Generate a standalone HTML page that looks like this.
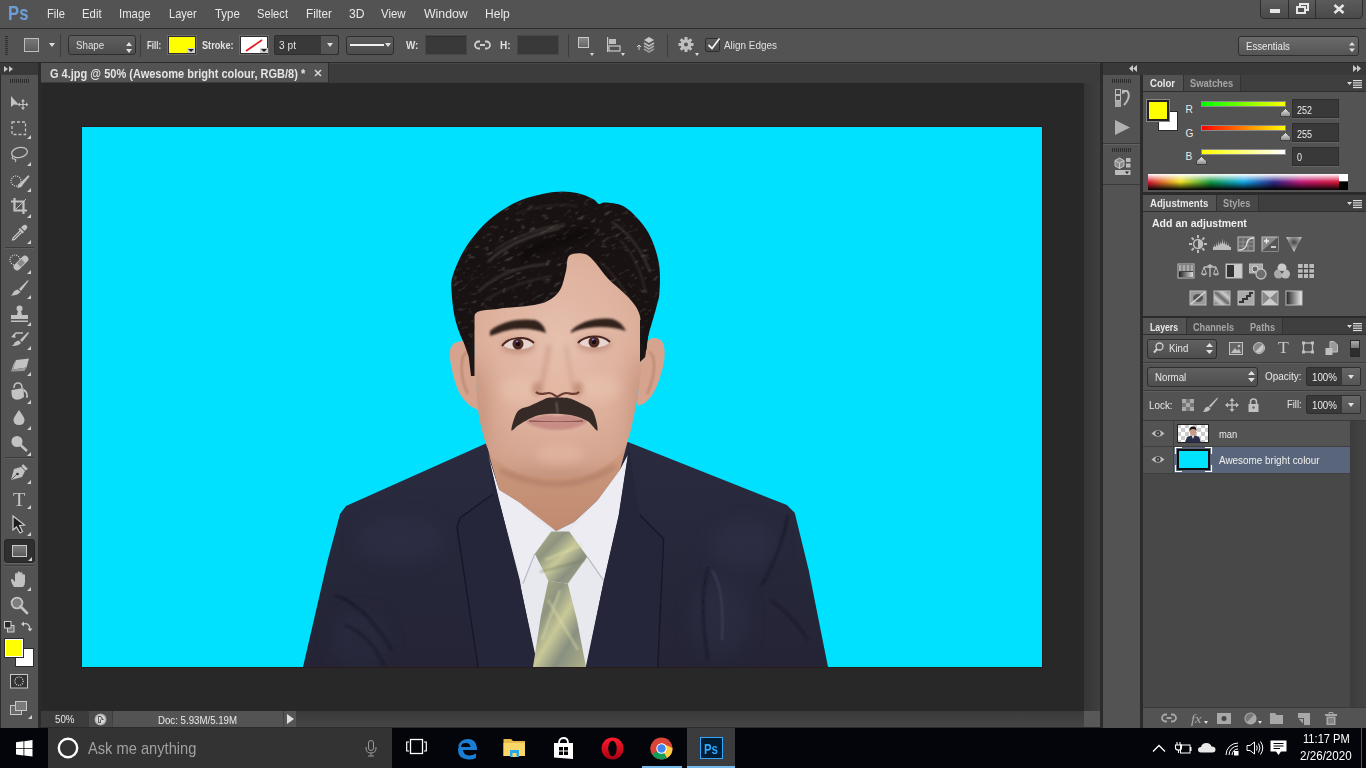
<!DOCTYPE html><html><head><meta charset="utf-8"><style>
html,body{margin:0;padding:0;width:1366px;height:768px;overflow:hidden;background:#2b2b2b}
body>div,body>span,body>svg{position:absolute;box-sizing:border-box}
.t{position:absolute;line-height:1.117;white-space:nowrap;font-family:"Liberation Sans",sans-serif}
svg{overflow:visible}
</style></head><body>
<div style="left:0px;top:0px;width:1366px;height:28px;background:#535353"></div>
<div style="left:0px;top:28px;width:1366px;height:1px;background:#2b2b2b"></div>
<div style="left:0px;top:29px;width:1366px;height:33px;background:#535353"></div>
<div style="left:0px;top:62px;width:1366px;height:1px;background:#2b2b2b"></div>
<div style="left:0px;top:63px;width:1366px;height:665px;background:#2b2b2b"></div>
<div style="left:41px;top:83px;width:1043px;height:628px;background:#282828"></div>
<div style="left:41px;top:63px;width:1059px;height:20px;background:#3c3c3c;border-top:1px solid #474747"></div>
<div style="left:41px;top:63px;width:287px;height:19px;background:#535353"></div>
<div style="left:328px;top:63px;width:1px;height:20px;background:#2e2e2e"></div>
<div style="left:1084px;top:83px;width:16px;height:628px;background:linear-gradient(90deg,#363636,#3f3f3f)"></div>
<div style="left:41px;top:711px;width:1043px;height:16px;background:linear-gradient(#3a3a3a,#454545)"></div>
<div style="left:1084px;top:711px;width:16px;height:16px;background:#585858"></div>
<div style="left:0px;top:63px;width:38px;height:12px;background:#393939"></div>
<div style="left:1px;top:75px;width:37px;height:653px;background:#535353"></div>
<div style="left:1103px;top:63px;width:263px;height:12px;background:#393939"></div>
<div style="left:1103px;top:75px;width:37px;height:90px;background:#535353"></div>
<div style="left:1103px;top:141px;width:37px;height:1px;background:#3a3a3a"></div>
<div style="left:1103px;top:75px;width:37px;height:653px;background:#535353"></div>
<div style="left:1143px;top:75px;width:223px;height:117px;background:#535353"></div>
<div style="left:1143px;top:195px;width:223px;height:121px;background:#535353"></div>
<div style="left:1143px;top:318px;width:223px;height:410px;background:#535353"></div>
<div style="left:0px;top:728px;width:1366px;height:40px;background:#03050a"></div>
<span class="t" style="left:7.50px;top:1.43px;font-size:21.08px;color:#6d9fd6;font-weight:700;transform:scaleX(0.794);transform-origin:0 0;">Ps</span>
<span class="t" style="left:47.00px;top:7.42px;font-size:12.79px;color:#e8e8e8;font-weight:400;transform:scaleX(0.874);transform-origin:0 0;">File</span>
<span class="t" style="left:82.40px;top:7.42px;font-size:12.79px;color:#e8e8e8;font-weight:400;transform:scaleX(0.888);transform-origin:0 0;">Edit</span>
<span class="t" style="left:119.30px;top:7.42px;font-size:12.79px;color:#e8e8e8;font-weight:400;transform:scaleX(0.886);transform-origin:0 0;">Image</span>
<span class="t" style="left:169.40px;top:7.42px;font-size:12.79px;color:#e8e8e8;font-weight:400;transform:scaleX(0.863);transform-origin:0 0;">Layer</span>
<span class="t" style="left:214.50px;top:7.42px;font-size:12.79px;color:#e8e8e8;font-weight:400;transform:scaleX(0.894);transform-origin:0 0;">Type</span>
<span class="t" style="left:257.00px;top:7.42px;font-size:12.79px;color:#e8e8e8;font-weight:400;transform:scaleX(0.872);transform-origin:0 0;">Select</span>
<span class="t" style="left:306.00px;top:7.42px;font-size:12.79px;color:#e8e8e8;font-weight:400;transform:scaleX(0.916);transform-origin:0 0;">Filter</span>
<span class="t" style="left:349.00px;top:7.42px;font-size:12.79px;color:#e8e8e8;font-weight:400;transform:scaleX(0.953);transform-origin:0 0;">3D</span>
<span class="t" style="left:381.00px;top:7.42px;font-size:12.79px;color:#e8e8e8;font-weight:400;transform:scaleX(0.895);transform-origin:0 0;">View</span>
<span class="t" style="left:424.00px;top:7.42px;font-size:12.79px;color:#e8e8e8;font-weight:400;transform:scaleX(0.960);transform-origin:0 0;">Window</span>
<span class="t" style="left:485.00px;top:7.42px;font-size:12.79px;color:#e8e8e8;font-weight:400;transform:scaleX(0.944);transform-origin:0 0;">Help</span>
<div style="left:1260px;top:-2px;width:103px;height:21px;background:linear-gradient(#5c5c5c,#4a4a4a);border:1px solid #2e2e2e;border-radius:0 0 4px 4px"></div>
<div style="left:1288px;top:0px;width:1px;height:18px;background:#2e2e2e"></div>
<div style="left:1315px;top:0px;width:1px;height:18px;background:#2e2e2e"></div>
<div style="left:1270px;top:9px;width:10px;height:4px;background:#e6e6e6"></div>
<svg style="left:1296px;top:3px;" width="13" height="11" viewBox="0 0 13 11"><rect x="4" y="1" width="8" height="6" fill="none" stroke="#e6e6e6" stroke-width="2"/><rect x="1" y="4" width="8" height="6" fill="#4f4f4f" stroke="#e6e6e6" stroke-width="2"/></svg>
<svg style="left:1333px;top:4px;" width="12" height="10" viewBox="0 0 12 10"><path d="M1.5 1 L10.5 9 M10.5 1 L1.5 9" stroke="#e6e6e6" stroke-width="2.6"/></svg>
<svg style="left:5px;top:36px;" width="4" height="20" viewBox="0 0 4 20"><rect x="0" y="0" width="3" height="1" fill="#2e2e2e"/><rect x="0" y="2" width="3" height="1" fill="#2e2e2e"/><rect x="0" y="4" width="3" height="1" fill="#2e2e2e"/><rect x="0" y="6" width="3" height="1" fill="#2e2e2e"/><rect x="0" y="8" width="3" height="1" fill="#2e2e2e"/><rect x="0" y="10" width="3" height="1" fill="#2e2e2e"/><rect x="0" y="12" width="3" height="1" fill="#2e2e2e"/><rect x="0" y="14" width="3" height="1" fill="#2e2e2e"/><rect x="0" y="16" width="3" height="1" fill="#2e2e2e"/><rect x="0" y="18" width="3" height="1" fill="#2e2e2e"/></svg>
<div style="left:24px;top:38px;width:15px;height:14px;background:linear-gradient(#777,#5c5c5c);border:1px solid #bdbdbd"></div>
<svg style="left:49px;top:43px;" width="6" height="4" viewBox="0 0 6 4"><path d="M0 0 H6 L3 4 Z" fill="#dedede"/></svg>
<div style="left:60px;top:34px;width:1px;height:23px;background:#3e3e3e"></div>
<div style="left:68px;top:35px;width:68px;height:20px;background:linear-gradient(#5f5f5f,#4d4d4d);border:1px solid #2e2e2e;border-radius:3px"></div>
<span class="t" style="left:75.80px;top:38.83px;font-size:10.90px;color:#e0e0e0;font-weight:400;transform:scaleX(0.895);transform-origin:0 0;">Shape</span>
<svg style="left:126px;top:42px;" width="6" height="12" viewBox="0 0 6 12"><path d="M0 4 L3 0 L6 4 Z M0 7 L3 11 L6 7 Z" fill="#e0e0e0"/></svg>
<div style="left:140px;top:34px;width:1px;height:23px;background:#3e3e3e"></div>
<span class="t" style="left:146.90px;top:38.83px;font-size:10.90px;color:#e0e0e0;font-weight:700;transform:scaleX(0.729);transform-origin:0 0;">Fill:</span>
<div style="left:168px;top:36px;width:28px;height:18px;background:#ffff00;border:1px solid #2e2e2e;outline:1px solid #6a6a6a"></div>
<svg style="left:187px;top:48px;" width="8" height="5" viewBox="0 0 8 5"><rect width="8" height="5" fill="#d0d0d0"/><path d="M1 1 H7 L4 4Z" fill="#222"/></svg>
<span class="t" style="left:201.80px;top:38.83px;font-size:10.90px;color:#e0e0e0;font-weight:700;transform:scaleX(0.841);transform-origin:0 0;">Stroke:</span>
<div style="left:240px;top:36px;width:28px;height:18px;background:#fff;border:1px solid #2e2e2e;outline:1px solid #6a6a6a"></div>
<svg style="left:244px;top:38px;" width="20" height="14" viewBox="0 0 20 14"><path d="M2 13 L18 2" stroke="#e02020" stroke-width="1.8"/></svg>
<svg style="left:260px;top:48px;" width="8" height="5" viewBox="0 0 8 5"><rect width="8" height="5" fill="#d0d0d0"/><path d="M1 1 H7 L4 4Z" fill="#222"/></svg>
<div style="left:274px;top:35px;width:65px;height:20px;background:#393939;border:1px solid #2e2e2e;border-radius:2px"></div>
<div style="left:321px;top:36px;width:17px;height:18px;background:#555;border-radius:0 2px 2px 0"></div>
<span class="t" style="left:279.00px;top:38.83px;font-size:10.90px;color:#e0e0e0;font-weight:400;transform:scaleX(0.934);transform-origin:0 0;">3 pt</span>
<svg style="left:327px;top:43px;" width="6" height="4" viewBox="0 0 6 4"><path d="M0 0 H6 L3 4 Z" fill="#e0e0e0"/></svg>
<div style="left:346px;top:36px;width:48px;height:19px;background:linear-gradient(#5c5c5c,#4c4c4c);border:1px solid #2e2e2e;border-radius:3px"></div>
<div style="left:350px;top:44px;width:34px;height:2px;background:#f0f0f0"></div>
<svg style="left:385px;top:43px;" width="6" height="4" viewBox="0 0 6 4"><path d="M0 0 H6 L3 4 Z" fill="#e0e0e0"/></svg>
<span class="t" style="left:405.90px;top:38.83px;font-size:10.90px;color:#e0e0e0;font-weight:700;transform:scaleX(0.903);transform-origin:0 0;">W:</span>
<div style="left:425px;top:35px;width:42px;height:20px;background:#393939;border:1px solid #464646;box-shadow:inset 0 1px 0 #2e2e2e"></div>
<svg style="left:475px;top:39px;" width="15" height="12" viewBox="0 0 15 12"><path d="M5 2.5 H3.5 A3.5 3.5 0 0 0 3.5 9.5 H5 M10 2.5 H11.5 A3.5 3.5 0 0 1 11.5 9.5 H10 M5 6 H10" fill="none" stroke="#cfcfcf" stroke-width="1.8"/></svg>
<span class="t" style="left:499.90px;top:38.83px;font-size:10.90px;color:#e0e0e0;font-weight:700;transform:scaleX(0.922);transform-origin:0 0;">H:</span>
<div style="left:517px;top:35px;width:42px;height:20px;background:#393939;border:1px solid #464646"></div>
<div style="left:568px;top:34px;width:1px;height:23px;background:#3e3e3e"></div>
<div style="left:578px;top:37px;width:11px;height:11px;background:linear-gradient(#888,#666);border:1px solid #c8c8c8"></div>
<svg style="left:590px;top:53px;" width="4" height="3" viewBox="0 0 4 3"><path d="M0 0 H4 L2 3Z" fill="#ddd"/></svg>
<svg style="left:607px;top:37px;" width="15" height="15" viewBox="0 0 15 15"><rect x="0" y="0" width="1.2" height="15" fill="#c8c8c8"/><rect x="2" y="2" width="7" height="5" fill="#bdbdbd"/><rect x="2" y="9" width="11" height="5" fill="none" stroke="#c8c8c8" stroke-width="1.2"/></svg>
<svg style="left:621px;top:53px;" width="4" height="3" viewBox="0 0 4 3"><path d="M0 0 H4 L2 3Z" fill="#ddd"/></svg>
<svg style="left:636px;top:36px;" width="20" height="19" viewBox="0 0 20 19"><path d="M3 9 V14 M1 11 L3 9 L5 11" stroke="#cfcfcf" stroke-width="1" fill="none"/><path d="M8 4 L13 1 L18 4 L13 7Z" fill="#c8c8c8"/><path d="M8 7 L13 10 L18 7" stroke="#bbb" stroke-width="1.6" fill="none"/><path d="M8 10 L13 13 L18 10" stroke="#aaa" stroke-width="1.6" fill="none"/><path d="M8 13 L13 16 L18 13" stroke="#999" stroke-width="1.6" fill="none"/></svg>
<div style="left:667px;top:34px;width:1px;height:23px;background:#3e3e3e"></div>
<svg style="left:678px;top:37px;" width="16" height="16" viewBox="0 0 16 16"><g transform="translate(8,7.5)"><circle r="5.3" fill="#bfbfbf"/><rect x="-1.5" y="-7.5" width="3" height="3.5" fill="#bfbfbf" transform="rotate(0)"/><rect x="-1.5" y="-7.5" width="3" height="3.5" fill="#bfbfbf" transform="rotate(45)"/><rect x="-1.5" y="-7.5" width="3" height="3.5" fill="#bfbfbf" transform="rotate(90)"/><rect x="-1.5" y="-7.5" width="3" height="3.5" fill="#bfbfbf" transform="rotate(135)"/><rect x="-1.5" y="-7.5" width="3" height="3.5" fill="#bfbfbf" transform="rotate(180)"/><rect x="-1.5" y="-7.5" width="3" height="3.5" fill="#bfbfbf" transform="rotate(225)"/><rect x="-1.5" y="-7.5" width="3" height="3.5" fill="#bfbfbf" transform="rotate(270)"/><rect x="-1.5" y="-7.5" width="3" height="3.5" fill="#bfbfbf" transform="rotate(315)"/><circle r="2" fill="#535353"/></g></svg>
<svg style="left:695px;top:53px;" width="4" height="3" viewBox="0 0 4 3"><path d="M0 0 H4 L2 3Z" fill="#ddd"/></svg>
<div style="left:705px;top:38px;width:15px;height:14px;background:linear-gradient(#5a5a5a,#4a4a4a);border:1px solid #2e2e2e;border-radius:2px"></div>
<svg style="left:706px;top:37px;" width="15" height="14" viewBox="0 0 15 14"><path d="M2.5 8 L6 11.5 L13.5 1.5" stroke="#eee" stroke-width="1.8" fill="none"/></svg>
<span class="t" style="left:724.00px;top:38.83px;font-size:10.90px;color:#e0e0e0;font-weight:400;transform:scaleX(0.910);transform-origin:0 0;">Align Edges</span>
<div style="left:1238px;top:36px;width:121px;height:20px;background:linear-gradient(#6a6a6a,#555);border:1px solid #2e2e2e;border-radius:3px"></div>
<span class="t" style="left:1245.80px;top:39.53px;font-size:10.90px;color:#ececec;font-weight:400;transform:scaleX(0.883);transform-origin:0 0;">Essentials</span>
<svg style="left:1349px;top:42px;" width="6" height="10" viewBox="0 0 6 10"><path d="M0 3.5 L3 0 L6 3.5 Z M0 6.5 L3 10 L6 6.5 Z" fill="#e0e0e0"/></svg>
<span class="t" style="left:50.20px;top:67.55px;font-size:12.21px;color:#e4e4e4;font-weight:700;transform:scaleX(0.902);transform-origin:0 0;">G 4.jpg @ 50% (Awesome bright colour, RGB/8) *</span>
<svg style="left:314px;top:69px;" width="8" height="8" viewBox="0 0 8 8"><path d="M1 1 L7 7 M7 1 L1 7" stroke="#d8d8d8" stroke-width="1.5"/></svg>
<svg style="left:4px;top:66px;" width="9" height="6" viewBox="0 0 9 6"><path d="M0 0 L4 3 L0 6Z M5 0 L9 3 L5 6Z" fill="#c8c8c8"/></svg>
<svg style="left:10px;top:79px;" width="20" height="4" viewBox="0 0 20 4"><rect x="0" y="0" width="1" height="4" fill="#2c2c2c"/><rect x="2" y="0" width="1" height="4" fill="#2c2c2c"/><rect x="4" y="0" width="1" height="4" fill="#2c2c2c"/><rect x="6" y="0" width="1" height="4" fill="#2c2c2c"/><rect x="8" y="0" width="1" height="4" fill="#2c2c2c"/><rect x="10" y="0" width="1" height="4" fill="#2c2c2c"/><rect x="12" y="0" width="1" height="4" fill="#2c2c2c"/><rect x="14" y="0" width="1" height="4" fill="#2c2c2c"/><rect x="16" y="0" width="1" height="4" fill="#2c2c2c"/><rect x="18" y="0" width="1" height="4" fill="#2c2c2c"/></svg>
<div style="left:41px;top:711px;width:48px;height:16px;background:#3c3c3c"></div>
<span class="t" style="left:55.30px;top:713.73px;font-size:10.47px;color:#e8e8e8;font-weight:400;transform:scaleX(0.932);transform-origin:0 0;">50%</span>
<div style="left:89px;top:711px;width:23px;height:16px;background:#4b4b4b"></div>
<svg style="left:94px;top:713px;" width="13" height="13" viewBox="0 0 13 13"><defs><radialGradient id="sg"><stop offset="0.6" stop-color="#dadada"/><stop offset="1" stop-color="#9a9a9a"/></radialGradient></defs><circle cx="6.5" cy="6.5" r="6" fill="url(#sg)"/><path d="M4 3 H7 L10 7 H7 V10 H4Z" fill="#5a5a5a"/><path d="M5 4 H6.5 L8 6.5 H6 V9 H5Z" fill="#ddd"/></svg>
<div style="left:113px;top:711px;width:170px;height:16px;background:#535353"></div>
<span class="t" style="left:158.20px;top:714.69px;font-size:10.17px;color:#e8e8e8;font-weight:400;transform:scaleX(0.952);transform-origin:0 0;">Doc: 5.93M/5.19M</span>
<div style="left:284px;top:711px;width:12px;height:16px;background:#555"></div>
<svg style="left:287px;top:714px;" width="7" height="10" viewBox="0 0 7 10"><path d="M0 0 L7 5 L0 10Z" fill="#e0e0e0"/></svg>
<svg style="left:10px;top:95px;" width="19" height="15" viewBox="0 0 19 15"><path d="M1 1 L1 12 L4 9.5 L9 10 Z" fill="#c2c2c2"/><path d="M13 5 V14 M8.5 9.5 H17.5" stroke="#c2c2c2" stroke-width="1.2"/><path d="M13 4 L11 6.5 H15Z M13 15 L11 12.5 H15Z M7.5 9.5 L10 7.5 V11.5Z M18.5 9.5 L16 7.5 V11.5Z" fill="#c2c2c2"/></svg>
<svg style="left:11px;top:121px;" width="16" height="15" viewBox="0 0 16 15"><rect x="1" y="1" width="13.5" height="12.5" fill="none" stroke="#c2c2c2" stroke-width="1.3" stroke-dasharray="3 2"/></svg>
<svg style="left:27px;top:135px;" width="4" height="4" viewBox="0 0 4 4"><path d="M4 0 V4 H0Z" fill="#d0d0d0"/></svg>
<svg style="left:10px;top:146px;" width="19" height="17" viewBox="0 0 19 17"><ellipse cx="9.5" cy="6.5" rx="8" ry="5" fill="none" stroke="#c2c2c2" stroke-width="1.3" transform="rotate(-12 9.5 6.5)"/><path d="M3 10 Q1 13 4 13 Q7 13 5 16" fill="none" stroke="#c2c2c2" stroke-width="1.2"/></svg>
<svg style="left:27px;top:162px;" width="4" height="4" viewBox="0 0 4 4"><path d="M4 0 V4 H0Z" fill="#d0d0d0"/></svg>
<svg style="left:10px;top:174px;" width="20" height="15" viewBox="0 0 20 15"><circle cx="6" cy="7" r="5" fill="none" stroke="#ddd" stroke-width="1.1" stroke-dasharray="1 1.2"/><path d="M18.5 1 L10 9 Q7 11 7.5 14 Q12 13.5 13 10.5 L19.5 2.5Z" fill="#c2c2c2"/></svg>
<svg style="left:27px;top:188px;" width="4" height="4" viewBox="0 0 4 4"><path d="M4 0 V4 H0Z" fill="#d0d0d0"/></svg>
<svg style="left:10px;top:197px;" width="18" height="18" viewBox="0 0 18 18"><path d="M4.5 1 V13.5 H17 M1 4.5 H13.5 V17" fill="none" stroke="#c2c2c2" stroke-width="2.2"/><path d="M6 12 L16 2" stroke="#c2c2c2" stroke-width="1"/></svg>
<svg style="left:27px;top:214px;" width="4" height="4" viewBox="0 0 4 4"><path d="M4 0 V4 H0Z" fill="#d0d0d0"/></svg>
<svg style="left:11px;top:224px;" width="17" height="17" viewBox="0 0 17 17"><path d="M12 1.5 Q14.5 0 16 2 Q17 3.5 15.5 5 L13.5 7 L10 3.5Z" fill="#c2c2c2"/><path d="M9 4 L13 8 L11.5 9.5 L7.5 5.5Z" fill="#c2c2c2"/><path d="M9 7 L2 14 L1.5 16 L3.5 15.5 L10.5 8.5" fill="none" stroke="#d0d0d0" stroke-width="1.1"/></svg>
<svg style="left:27px;top:240px;" width="4" height="4" viewBox="0 0 4 4"><path d="M4 0 V4 H0Z" fill="#d0d0d0"/></svg>
<div style="left:5px;top:247px;width:29px;height:1px;background:#3c3c3c"></div>
<div style="left:5px;top:248px;width:29px;height:1px;background:#5e5e5e"></div>
<svg style="left:9px;top:253px;" width="21" height="18" viewBox="0 0 21 18"><circle cx="6" cy="7" r="5" fill="none" stroke="#ddd" stroke-width="1.1" stroke-dasharray="1 1.2"/><g transform="rotate(-45 12 10)"><rect x="3" y="6.5" width="18" height="7" rx="3.5" fill="#c2c2c2"/><rect x="9" y="7.5" width="6" height="5" fill="#8a8a8a"/></g></svg>
<svg style="left:27px;top:270px;" width="4" height="4" viewBox="0 0 4 4"><path d="M4 0 V4 H0Z" fill="#d0d0d0"/></svg>
<svg style="left:10px;top:279px;" width="19" height="17" viewBox="0 0 19 17"><path d="M18 1 L9 10 L11 12 L18.5 2Z" fill="#c2c2c2"/><path d="M8 10.5 Q4 11 3 14 Q2 16 0.5 16.5 Q7 17 10.5 13Z" fill="#c2c2c2"/></svg>
<svg style="left:27px;top:295px;" width="4" height="4" viewBox="0 0 4 4"><path d="M4 0 V4 H0Z" fill="#d0d0d0"/></svg>
<svg style="left:10px;top:305px;" width="19" height="18" viewBox="0 0 19 18"><circle cx="9.5" cy="3.5" r="3" fill="#c2c2c2"/><path d="M8 6 H11 L12 10 H7Z" fill="#c2c2c2"/><rect x="1" y="10" width="17" height="4" fill="#c2c2c2"/><rect x="1" y="15.5" width="17" height="1.5" fill="#c2c2c2"/></svg>
<svg style="left:27px;top:322px;" width="4" height="4" viewBox="0 0 4 4"><path d="M4 0 V4 H0Z" fill="#d0d0d0"/></svg>
<svg style="left:10px;top:331px;" width="20" height="16" viewBox="0 0 20 16"><path d="M18 1 L10 9 L12 11 L19 2Z" fill="#c2c2c2"/><path d="M9 9.5 Q5 10 4 13 Q3 14.5 1.5 15 Q8 15.5 11 12Z" fill="#c2c2c2"/><path d="M13 2 H6 L3 5" fill="none" stroke="#c2c2c2" stroke-width="1.5"/><path d="M1 6 L5 2.5 L5.5 7Z" fill="#c2c2c2"/></svg>
<svg style="left:27px;top:346px;" width="4" height="4" viewBox="0 0 4 4"><path d="M4 0 V4 H0Z" fill="#d0d0d0"/></svg>
<svg style="left:10px;top:357px;" width="20" height="16" viewBox="0 0 20 16"><path d="M6 3 L19 1.5 L16.5 10.5 L3 12.5Z" fill="#c2c2c2"/><path d="M3 12.5 L1 14.5 L14.5 14 L16.5 10.5" fill="#9a9a9a"/><path d="M6 3 L3.5 7 L1 14.5 L3 12.5" fill="#aaa"/></svg>
<svg style="left:27px;top:372px;" width="4" height="4" viewBox="0 0 4 4"><path d="M4 0 V4 H0Z" fill="#d0d0d0"/></svg>
<svg style="left:10px;top:382px;" width="20" height="19" viewBox="0 0 20 19"><path d="M4 6 Q4 1 8 1 Q12 1 12 6" fill="none" stroke="#c2c2c2" stroke-width="1.5"/><path d="M1.5 8 L13.5 6 L14 15 Q9 19 4 17 Q1 15 1.5 8Z" fill="#c2c2c2"/><path d="M14 7 Q18 9 18 15 Q17 17 16 15 Q17 11 13.5 9" fill="#c2c2c2"/></svg>
<svg style="left:27px;top:400px;" width="4" height="4" viewBox="0 0 4 4"><path d="M4 0 V4 H0Z" fill="#d0d0d0"/></svg>
<svg style="left:11px;top:409px;" width="16" height="17" viewBox="0 0 16 17"><path d="M8 1 Q3 8 2.5 10.5 Q2.5 16 8 16 Q13.5 16 13.5 10.5 Q13 8 8 1Z" fill="#c2c2c2"/></svg>
<svg style="left:27px;top:426px;" width="4" height="4" viewBox="0 0 4 4"><path d="M4 0 V4 H0Z" fill="#d0d0d0"/></svg>
<svg style="left:10px;top:435px;" width="19" height="17" viewBox="0 0 19 17"><circle cx="7" cy="6.5" r="5.5" fill="#c2c2c2"/><path d="M10.5 10 L17 16" stroke="#c2c2c2" stroke-width="2.5"/></svg>
<svg style="left:27px;top:452px;" width="4" height="4" viewBox="0 0 4 4"><path d="M4 0 V4 H0Z" fill="#d0d0d0"/></svg>
<div style="left:5px;top:457px;width:29px;height:1px;background:#3c3c3c"></div>
<div style="left:5px;top:458px;width:29px;height:1px;background:#5e5e5e"></div>
<svg style="left:10px;top:463px;" width="19" height="18" viewBox="0 0 19 18"><path d="M13 1 L18 6 L15.5 7.5 L11.5 3.5Z" fill="#c2c2c2"/><path d="M11 4 L15 8 L12 14 L1 17 L4 6Z" fill="#c2c2c2"/><circle cx="7.5" cy="11" r="1.3" fill="#333"/><path d="M1.5 16.5 L7 11" stroke="#444" stroke-width="0.8"/></svg>
<svg style="left:27px;top:480px;" width="4" height="4" viewBox="0 0 4 4"><path d="M4 0 V4 H0Z" fill="#d0d0d0"/></svg>
<span class="t" style="left:12.80px;top:488.90px;font-size:18.90px;color:#c4c4c4;font-weight:400;transform:scaleX(1.076);transform-origin:0 0;font-family:'Liberation Serif',serif;">T</span>
<svg style="left:27px;top:505px;" width="4" height="4" viewBox="0 0 4 4"><path d="M4 0 V4 H0Z" fill="#d0d0d0"/></svg>
<svg style="left:12px;top:515px;" width="15" height="19" viewBox="0 0 15 19"><path d="M1 1 L1 15 L4.5 12 L8 18 L10.5 16.5 L7.5 10.5 L12.5 10Z" fill="#1d1d1d" stroke="#cfcfcf" stroke-width="1.2"/></svg>
<svg style="left:27px;top:532px;" width="4" height="4" viewBox="0 0 4 4"><path d="M4 0 V4 H0Z" fill="#d0d0d0"/></svg>
<div style="left:4px;top:539px;width:31px;height:24px;background:#2f2f2f;border:1px solid #262626;border-radius:3px;box-shadow:0 1px 0 #666"></div>
<div style="left:12px;top:545px;width:15px;height:12px;background:linear-gradient(#7b7b7b,#5a5a5a);border:1px solid #c8c8c8"></div>
<svg style="left:28px;top:557px;" width="4" height="4" viewBox="0 0 4 4"><path d="M4 0 V4 H0Z" fill="#d0d0d0"/></svg>
<div style="left:5px;top:565px;width:29px;height:1px;background:#3c3c3c"></div>
<div style="left:5px;top:566px;width:29px;height:1px;background:#5e5e5e"></div>
<svg style="left:10px;top:571px;" width="19" height="17" viewBox="0 0 19 17"><path d="M4 16 Q1 12 1 9 Q1 7.5 2.5 8 L5 11 V3.5 Q5 2 6.3 2 Q7.5 2 7.5 3.5 V8 V1.8 Q7.5 0.5 8.8 0.5 Q10 0.5 10 1.8 V8 V2.5 Q10 1.3 11.3 1.3 Q12.5 1.3 12.5 2.5 V8.5 V4.5 Q12.5 3.3 13.7 3.3 Q15 3.3 15 4.5 V11 Q15 14 13 16Z" fill="#c2c2c2"/></svg>
<svg style="left:27px;top:587px;" width="4" height="4" viewBox="0 0 4 4"><path d="M4 0 V4 H0Z" fill="#d0d0d0"/></svg>
<svg style="left:10px;top:596px;" width="19" height="19" viewBox="0 0 19 19"><circle cx="7" cy="7" r="5.3" fill="none" stroke="#c2c2c2" stroke-width="2"/><circle cx="7" cy="7" r="4.3" fill="#7e7e7e"/><path d="M10.5 10.5 L17 17" stroke="#c2c2c2" stroke-width="2.8" stroke-linecap="round"/></svg>
<svg style="left:4px;top:621px;" width="11" height="12" viewBox="0 0 11 12"><rect x="3.5" y="4.5" width="6.5" height="6.5" fill="#777" stroke="#cfcfcf" stroke-width="1"/><rect x="0.5" y="0.5" width="6.5" height="6.5" fill="#2a2a2a" stroke="#cfcfcf" stroke-width="1"/></svg>
<svg style="left:21px;top:620px;" width="12" height="12" viewBox="0 0 12 12"><path d="M2 4 Q8 2 9 9" fill="none" stroke="#cfcfcf" stroke-width="1.2"/><path d="M0 4 L3 1.5 V6.5Z M9 11.5 L6.5 8.5 H11.5Z" fill="#cfcfcf"/></svg>
<div style="left:15px;top:648px;width:19px;height:19px;background:#fff;border:1px solid #2a2a2a"></div>
<div style="left:5px;top:639px;width:18px;height:18px;background:#ffff00;border:1px solid #fff;outline:1px solid #2a2a2a"></div>
<svg style="left:10px;top:674px;" width="18" height="15" viewBox="0 0 18 15"><rect x="0.5" y="0.5" width="17" height="13.5" fill="#333" stroke="#c8c8c8" stroke-width="1"/><circle cx="9" cy="7.2" r="4.2" fill="none" stroke="#e0e0e0" stroke-width="1.1" stroke-dasharray="1 1.1"/></svg>
<svg style="left:10px;top:701px;" width="18" height="15" viewBox="0 0 18 15"><rect x="0.5" y="4.5" width="11" height="9" fill="#6a6a6a" stroke="#c8c8c8" stroke-width="1"/><rect x="5.5" y="0.5" width="11" height="9" fill="#7a7a7a" stroke="#c8c8c8" stroke-width="1"/></svg>
<svg style="left:28px;top:715px;" width="4" height="4" viewBox="0 0 4 4"><path d="M4 0 V4 H0Z" fill="#d0d0d0"/></svg>
<svg style="left:1129px;top:65px;" width="8" height="7" viewBox="0 0 8 7"><path d="M4 0 L0 3.5 L4 7Z M8 0 L4 3.5 L8 7Z" fill="#c8c8c8"/></svg>
<svg style="left:1353px;top:65px;" width="8" height="7" viewBox="0 0 8 7"><path d="M0 0 L4 3.5 L0 7Z M4 0 L8 3.5 L4 7Z" fill="#c8c8c8"/></svg>
<svg style="left:1112px;top:79px;" width="20" height="4" viewBox="0 0 20 4"><rect x="0" y="0" width="1" height="4" fill="#2c2c2c"/><rect x="2" y="0" width="1" height="4" fill="#2c2c2c"/><rect x="4" y="0" width="1" height="4" fill="#2c2c2c"/><rect x="6" y="0" width="1" height="4" fill="#2c2c2c"/><rect x="8" y="0" width="1" height="4" fill="#2c2c2c"/><rect x="10" y="0" width="1" height="4" fill="#2c2c2c"/><rect x="12" y="0" width="1" height="4" fill="#2c2c2c"/><rect x="14" y="0" width="1" height="4" fill="#2c2c2c"/><rect x="16" y="0" width="1" height="4" fill="#2c2c2c"/><rect x="18" y="0" width="1" height="4" fill="#2c2c2c"/></svg>
<div style="left:1103px;top:143px;width:37px;height:1px;background:#3a3a3a"></div>
<div style="left:1103px;top:144px;width:37px;height:1px;background:#616161"></div>
<svg style="left:1112px;top:148px;" width="20" height="4" viewBox="0 0 20 4"><rect x="0" y="0" width="1" height="4" fill="#2c2c2c"/><rect x="2" y="0" width="1" height="4" fill="#2c2c2c"/><rect x="4" y="0" width="1" height="4" fill="#2c2c2c"/><rect x="6" y="0" width="1" height="4" fill="#2c2c2c"/><rect x="8" y="0" width="1" height="4" fill="#2c2c2c"/><rect x="10" y="0" width="1" height="4" fill="#2c2c2c"/><rect x="12" y="0" width="1" height="4" fill="#2c2c2c"/><rect x="14" y="0" width="1" height="4" fill="#2c2c2c"/><rect x="16" y="0" width="1" height="4" fill="#2c2c2c"/><rect x="18" y="0" width="1" height="4" fill="#2c2c2c"/></svg>
<div style="left:1103px;top:184px;width:37px;height:1px;background:#3a3a3a"></div>
<svg style="left:1115px;top:89px;" width="16" height="18" viewBox="0 0 16 18"><rect x="0.5" y="0.5" width="5" height="5" fill="none" stroke="#bbb"/><rect x="0.5" y="6.5" width="5" height="5" fill="none" stroke="#bbb"/><rect x="0" y="12" width="6" height="6" fill="#aaa"/><path d="M8 2 H12 Q15 5 13 10 Q12 13 9 16" fill="none" stroke="#bbb" stroke-width="2"/><path d="M7 0 L10 4 L7 5Z" fill="#bbb"/></svg>
<svg style="left:1115px;top:120px;" width="16" height="15" viewBox="0 0 16 15"><path d="M0 0 L15 7.5 L0 15Z" fill="#b0b0b0"/></svg>
<svg style="left:1114px;top:157px;" width="18" height="19" viewBox="0 0 18 19"><path d="M1 3.5 L5.5 1 L10 3.5 V9 L5.5 11.5 L1 9Z" fill="#8a8a8a" stroke="#d0d0d0" stroke-width="0.9"/><path d="M1 3.5 L5.5 6 L10 3.5 M5.5 6 V11.5" fill="none" stroke="#d0d0d0" stroke-width="0.9"/><rect x="12" y="1" width="4.5" height="4" fill="#bbb"/><rect x="12" y="6.5" width="4.5" height="4" fill="#bbb"/><rect x="1" y="13" width="15.5" height="5" fill="#bbb"/><path d="M11 14.5 H15 L13 17Z" fill="#222"/></svg>
<div style="left:1143px;top:75px;width:223px;height:17px;background:#3f3f3f"></div>
<div style="left:1143px;top:75px;width:40px;height:17px;background:#535353"></div>
<div style="left:1183px;top:75px;width:58px;height:17px;background:#474747;border-right:1px solid #333;border-left:1px solid #333"></div>
<div style="left:1143px;top:91px;width:223px;height:1px;background:#2f2f2f"></div>
<div style="left:1143px;top:92px;width:223px;height:100px;background:#535353"></div>
<span class="t" style="left:1150.00px;top:78.40px;font-size:10.61px;color:#e8e8e8;font-weight:700;transform:scaleX(0.903);transform-origin:0 0;">Color</span>
<span class="t" style="left:1190.00px;top:78.40px;font-size:10.61px;color:#a5a5a5;font-weight:700;transform:scaleX(0.884);transform-origin:0 0;">Swatches</span>
<svg style="left:1347px;top:80px;" width="15" height="8" viewBox="0 0 15 8"><path d="M0 2 H5 L2.5 5Z" fill="#ddd"/><rect x="6" y="0" width="9" height="1.2" fill="#ddd"/><rect x="6" y="2.3" width="9" height="1.2" fill="#ddd"/><rect x="6" y="4.6" width="9" height="1.2" fill="#ddd"/><rect x="6" y="6.9" width="9" height="1.2" fill="#ddd"/></svg>
<div style="left:1158px;top:111px;width:20px;height:20px;background:#fff;border:1px solid #2a2a2a"></div>
<div style="left:1147px;top:100px;width:22px;height:21px;background:#ffff00;border:2px solid #222;outline:1px solid #888"></div>
<div style="left:1201px;top:101px;width:85px;height:6px;background:linear-gradient(90deg,#00ff00,#fcff00);border:1px solid #8a8a8a"></div>
<svg style="left:1280px;top:108px;" width="11" height="9" viewBox="0 0 11 9"><path d="M5.5 0.5 L10.5 5 V8.5 H0.5 V5Z" fill="url(#thg)" stroke="#333" stroke-width="0.8"/><defs><linearGradient id="thg" x1="0" x2="0" y1="0" y2="1"><stop offset="0" stop-color="#eee"/><stop offset="1" stop-color="#888"/></linearGradient></defs></svg>
<div style="left:1292px;top:99px;width:47px;height:19px;background:#393939;border:1px solid #2e2e2e;box-shadow:0 1px 0 #666"></div>
<span class="t" style="left:1297.00px;top:104.62px;font-size:10.03px;color:#ececec;font-weight:400;transform:scaleX(0.896);transform-origin:0 0;">252</span>
<span class="t" style="left:1185.60px;top:104.09px;font-size:10.17px;color:#e8e8e8;font-weight:400;">R</span>
<div style="left:1201px;top:125px;width:85px;height:6px;background:linear-gradient(90deg,#ff0000,#ffff00);border:1px solid #8a8a8a"></div>
<svg style="left:1280px;top:132px;" width="11" height="9" viewBox="0 0 11 9"><path d="M5.5 0.5 L10.5 5 V8.5 H0.5 V5Z" fill="url(#thg)" stroke="#333" stroke-width="0.8"/><defs><linearGradient id="thg" x1="0" x2="0" y1="0" y2="1"><stop offset="0" stop-color="#eee"/><stop offset="1" stop-color="#888"/></linearGradient></defs></svg>
<div style="left:1292px;top:123px;width:47px;height:19px;background:#393939;border:1px solid #2e2e2e;box-shadow:0 1px 0 #666"></div>
<span class="t" style="left:1297.00px;top:128.72px;font-size:10.03px;color:#ececec;font-weight:400;transform:scaleX(0.896);transform-origin:0 0;">255</span>
<span class="t" style="left:1185.60px;top:127.79px;font-size:10.17px;color:#e8e8e8;font-weight:400;">G</span>
<div style="left:1201px;top:149px;width:85px;height:6px;background:linear-gradient(90deg,#ffff00,#ffffff);border:1px solid #8a8a8a"></div>
<svg style="left:1196px;top:156px;" width="11" height="9" viewBox="0 0 11 9"><path d="M5.5 0.5 L10.5 5 V8.5 H0.5 V5Z" fill="url(#thg)" stroke="#333" stroke-width="0.8"/><defs><linearGradient id="thg" x1="0" x2="0" y1="0" y2="1"><stop offset="0" stop-color="#eee"/><stop offset="1" stop-color="#888"/></linearGradient></defs></svg>
<div style="left:1292px;top:147px;width:47px;height:19px;background:#393939;border:1px solid #2e2e2e;box-shadow:0 1px 0 #666"></div>
<span class="t" style="left:1297.00px;top:152.22px;font-size:10.03px;color:#ececec;font-weight:400;transform:scaleX(0.898);transform-origin:0 0;">0</span>
<span class="t" style="left:1185.60px;top:151.49px;font-size:10.17px;color:#e8e8e8;font-weight:400;">B</span>
<svg style="left:1148px;top:174px;" width="200" height="16" viewBox="0 0 200 16"><defs><linearGradient id="hue" x1="0" x2="1"><stop offset="0" stop-color="#d81838"/><stop offset="0.17" stop-color="#f0e020"/><stop offset="0.33" stop-color="#109840"/><stop offset="0.5" stop-color="#10a8e8"/><stop offset="0.66" stop-color="#302888"/><stop offset="0.8" stop-color="#c01878"/><stop offset="1" stop-color="#d81838"/></linearGradient><linearGradient id="lum" x1="0" x2="0" y1="0" y2="1"><stop offset="0" stop-color="#fff" stop-opacity="1"/><stop offset="0.5" stop-color="#fff" stop-opacity="0"/><stop offset="0.5" stop-color="#000" stop-opacity="0"/><stop offset="1" stop-color="#000" stop-opacity="1"/></linearGradient></defs><rect x="0" y="0" width="191" height="16" fill="url(#hue)"/><rect x="0" y="0" width="191" height="16" fill="url(#lum)"/><rect x="191" y="0" width="9" height="7.5" fill="#fff"/><rect x="191" y="7.5" width="9" height="8.5" fill="#000"/></svg>
<div style="left:1143px;top:192px;width:223px;height:3px;background:#2b2b2b"></div>
<div style="left:1143px;top:195px;width:223px;height:17px;background:#3f3f3f"></div>
<div style="left:1143px;top:195px;width:73px;height:17px;background:#535353"></div>
<div style="left:1216px;top:195px;width:43px;height:17px;background:#474747;border-right:1px solid #333;border-left:1px solid #333"></div>
<div style="left:1143px;top:211px;width:223px;height:1px;background:#2f2f2f"></div>
<div style="left:1143px;top:212px;width:223px;height:104px;background:#535353"></div>
<span class="t" style="left:1150.00px;top:198.40px;font-size:10.61px;color:#e8e8e8;font-weight:700;transform:scaleX(0.907);transform-origin:0 0;">Adjustments</span>
<span class="t" style="left:1223.00px;top:198.40px;font-size:10.61px;color:#a5a5a5;font-weight:700;transform:scaleX(0.874);transform-origin:0 0;">Styles</span>
<svg style="left:1347px;top:200px;" width="15" height="8" viewBox="0 0 15 8"><path d="M0 2 H5 L2.5 5Z" fill="#ddd"/><rect x="6" y="0" width="9" height="1.2" fill="#ddd"/><rect x="6" y="2.3" width="9" height="1.2" fill="#ddd"/><rect x="6" y="4.6" width="9" height="1.2" fill="#ddd"/><rect x="6" y="6.9" width="9" height="1.2" fill="#ddd"/></svg>
<span class="t" style="left:1151.80px;top:218.23px;font-size:10.47px;color:#f0f0f0;font-weight:700;transform:scaleX(1.007);transform-origin:0 0;">Add an adjustment</span>
<svg style="left:1188.5px;top:235px;" width="18" height="18" viewBox="0 0 18 18"><circle cx="9" cy="9" r="4.5" fill="none" stroke="#bdbdbd" stroke-width="1.5"/><path d="M9 4.5 A4.5 4.5 0 0 1 9 13.5Z" fill="#bdbdbd"/><rect x="8" y="0" width="2" height="3" fill="#bdbdbd" transform="rotate(0 9 9)"/><rect x="8" y="0" width="2" height="3" fill="#bdbdbd" transform="rotate(45 9 9)"/><rect x="8" y="0" width="2" height="3" fill="#bdbdbd" transform="rotate(90 9 9)"/><rect x="8" y="0" width="2" height="3" fill="#bdbdbd" transform="rotate(135 9 9)"/><rect x="8" y="0" width="2" height="3" fill="#bdbdbd" transform="rotate(180 9 9)"/><rect x="8" y="0" width="2" height="3" fill="#bdbdbd" transform="rotate(225 9 9)"/><rect x="8" y="0" width="2" height="3" fill="#bdbdbd" transform="rotate(270 9 9)"/><rect x="8" y="0" width="2" height="3" fill="#bdbdbd" transform="rotate(315 9 9)"/></svg>
<svg style="left:1213px;top:235px;" width="18" height="18" viewBox="0 0 18 18"><path d="M0 15 V12 L1 12 L1.5 9 L2 12 L3 11 L3.5 7 L4 11 L5 10 L5.5 5 L6 10 L7 9 L7.5 6 L8 9 L9 8 L9.5 3 L10 8 L11 9 L11.5 5 L12 9 L13 10 L13.5 6 L14 10 L15 11 L15.5 8 L16 11 L17 12 L18 12 V15Z" fill="#bdbdbd"/></svg>
<svg style="left:1237px;top:235px;" width="18" height="18" viewBox="0 0 18 18"><rect x="1" y="2" width="16" height="14" fill="#6a6a6a" stroke="#bdbdbd"/><path d="M1 7 H17 M1 11 H17 M6 2 V16 M11 2 V16" stroke="#999" stroke-width="0.8"/><path d="M2 15 Q9 15 10 8 Q11 3 17 3" fill="none" stroke="#e0e0e0" stroke-width="1.3"/></svg>
<svg style="left:1261px;top:235px;" width="18" height="18" viewBox="0 0 18 18"><rect x="1" y="2" width="16" height="14" fill="#888" stroke="#bdbdbd"/><path d="M1 16 L17 2 V16Z" fill="#555"/><path d="M3 6 H8 M5.5 3.5 V8.5 M10 12 H15" stroke="#eee" stroke-width="1.4"/></svg>
<svg style="left:1285px;top:235px;" width="18" height="18" viewBox="0 0 18 18"><defs><radialGradient id="vib" cx="0.5" cy="0.35" r="0.6"><stop offset="0" stop-color="#444"/><stop offset="1" stop-color="#ccc"/></radialGradient></defs><path d="M1 2 H17 L9 17Z" fill="url(#vib)"/></svg>
<svg style="left:1177px;top:262px;" width="18" height="18" viewBox="0 0 18 18"><rect x="1" y="2" width="16" height="14" fill="#444" stroke="#bdbdbd"/><rect x="2" y="3" width="14" height="6" fill="#aaa"/><path d="M5 3 V9 M9 3 V9 M13 3 V9" stroke="#666"/><defs><linearGradient id="bw1"><stop offset="0" stop-color="#222"/><stop offset="1" stop-color="#ddd"/></linearGradient></defs><rect x="2" y="10" width="14" height="5" fill="url(#bw1)"/></svg>
<svg style="left:1200.5px;top:262px;" width="18" height="18" viewBox="0 0 18 18"><path d="M9 2 V15 M3 5 H15" stroke="#bdbdbd" stroke-width="1.3"/><path d="M6 3 L9 6 L12 3Z" fill="#bdbdbd"/><path d="M3 5 L0.5 12 H5.5Z M15 5 L12.5 12 H17.5Z" fill="none" stroke="#bdbdbd"/><path d="M0.5 12 Q3 15 5.5 12Z M12.5 12 Q15 15 17.5 12Z" fill="#bdbdbd"/></svg>
<svg style="left:1225px;top:262px;" width="18" height="18" viewBox="0 0 18 18"><rect x="1" y="2" width="16" height="14" fill="#ccc" stroke="#bdbdbd"/><rect x="2" y="3" width="7" height="12" fill="#333"/></svg>
<svg style="left:1248.5px;top:262px;" width="18" height="18" viewBox="0 0 18 18"><rect x="0.5" y="2" width="13" height="9" fill="#aaa" stroke="#bdbdbd"/><circle cx="6" cy="7" r="3" fill="#666" stroke="#ddd"/><circle cx="12" cy="12" r="5" fill="#6e6e6e" stroke="#bdbdbd" stroke-width="1.3"/></svg>
<svg style="left:1273px;top:262px;" width="18" height="18" viewBox="0 0 18 18"><circle cx="9" cy="6" r="4.5" fill="#ccc"/><circle cx="5.5" cy="12" r="4.5" fill="#aaa"/><circle cx="12.5" cy="12" r="4.5" fill="#bbb"/><path d="M7 9 L9 12 L11 9Z" fill="#555"/></svg>
<svg style="left:1297px;top:262px;" width="18" height="18" viewBox="0 0 18 18"><rect x="1" y="2" width="16" height="14" fill="#bbb"/><path d="M1 6.7 H17 M1 11.3 H17 M6.3 2 V16 M11.7 2 V16" stroke="#444" stroke-width="1.2"/></svg>
<svg style="left:1188.5px;top:289px;" width="18" height="18" viewBox="0 0 18 18"><rect x="1" y="2" width="16" height="14" fill="#999" stroke="#bdbdbd"/><ellipse cx="9" cy="9" rx="5" ry="4" fill="#555"/><path d="M2 15 L16 3" stroke="#ddd" stroke-width="1.2"/></svg>
<svg style="left:1213px;top:289px;" width="18" height="18" viewBox="0 0 18 18"><defs><linearGradient id="po" x1="0" y1="1" x2="1" y2="0"><stop offset="0" stop-color="#666"/><stop offset="0.3" stop-color="#ccc"/><stop offset="0.5" stop-color="#666"/><stop offset="0.7" stop-color="#ccc"/><stop offset="1" stop-color="#777"/></linearGradient></defs><rect x="1" y="2" width="16" height="14" fill="url(#po)" stroke="#bdbdbd"/></svg>
<svg style="left:1237px;top:289px;" width="18" height="18" viewBox="0 0 18 18"><rect x="1" y="2" width="16" height="14" fill="#aaa" stroke="#bdbdbd"/><path d="M2 13 H6 V10 H10 V7 H13 V4 H16" fill="none" stroke="#333" stroke-width="2"/></svg>
<svg style="left:1261px;top:289px;" width="18" height="18" viewBox="0 0 18 18"><rect x="1" y="2" width="16" height="14" fill="#888" stroke="#bdbdbd"/><path d="M1 2 L9 9 L17 2Z M1 16 L9 9 L17 16Z" fill="#ccc"/></svg>
<svg style="left:1285px;top:289px;" width="18" height="18" viewBox="0 0 18 18"><defs><linearGradient id="gm"><stop offset="0" stop-color="#222"/><stop offset="1" stop-color="#eee"/></linearGradient></defs><rect x="1" y="2" width="16" height="14" fill="url(#gm)" stroke="#bdbdbd"/></svg>
<div style="left:1143px;top:316px;width:223px;height:2px;background:#2b2b2b"></div>
<div style="left:1143px;top:318px;width:223px;height:17px;background:#3f3f3f"></div>
<div style="left:1143px;top:318px;width:43px;height:17px;background:#535353"></div>
<div style="left:1186px;top:318px;width:57px;height:17px;background:#474747;border-left:1px solid #333;border-right:1px solid #333"></div>
<div style="left:1242px;top:318px;width:41px;height:17px;background:#474747;border-right:1px solid #333"></div>
<div style="left:1143px;top:334px;width:223px;height:1px;background:#2f2f2f"></div>
<div style="left:1143px;top:335px;width:223px;height:393px;background:#535353"></div>
<span class="t" style="left:1150.40px;top:321.70px;font-size:10.61px;color:#e8e8e8;font-weight:700;transform:scaleX(0.821);transform-origin:0 0;">Layers</span>
<span class="t" style="left:1193.00px;top:321.70px;font-size:10.61px;color:#a5a5a5;font-weight:700;transform:scaleX(0.859);transform-origin:0 0;">Channels</span>
<span class="t" style="left:1250.40px;top:321.70px;font-size:10.61px;color:#a5a5a5;font-weight:700;transform:scaleX(0.865);transform-origin:0 0;">Paths</span>
<svg style="left:1347px;top:323px;" width="15" height="8" viewBox="0 0 15 8"><path d="M0 2 H5 L2.5 5Z" fill="#ddd"/><rect x="6" y="0" width="9" height="1.2" fill="#ddd"/><rect x="6" y="2.3" width="9" height="1.2" fill="#ddd"/><rect x="6" y="4.6" width="9" height="1.2" fill="#ddd"/><rect x="6" y="6.9" width="9" height="1.2" fill="#ddd"/></svg>
<div style="left:1147px;top:339px;width:70px;height:20px;background:linear-gradient(#606060,#4e4e4e);border:1px solid #2e2e2e;border-radius:3px"></div>
<svg style="left:1153px;top:342px;" width="11" height="12" viewBox="0 0 11 12"><circle cx="6.5" cy="4.5" r="3.5" fill="none" stroke="#d0d0d0" stroke-width="1.3"/><path d="M4 7 L1 10.5" stroke="#d0d0d0" stroke-width="2"/></svg>
<span class="t" style="left:1169.00px;top:343.33px;font-size:10.47px;color:#e8e8e8;font-weight:400;transform:scaleX(0.922);transform-origin:0 0;">Kind</span>
<svg style="left:1206px;top:343px;" width="7" height="11" viewBox="0 0 7 11"><path d="M0 4 L3.5 0 L7 4Z M0 7 L3.5 11 L7 7Z" fill="#e0e0e0"/></svg>
<svg style="left:1229px;top:341px;" width="14" height="15" viewBox="0 0 14 15"><rect x="0.5" y="1.5" width="13" height="12" fill="#666" stroke="#c0c0c0"/><path d="M2 12 L6 7 L8 9.5 L10 8 L12 12Z" fill="#c0c0c0"/><circle cx="10" cy="5" r="1.3" fill="#c0c0c0"/></svg>
<svg style="left:1253px;top:342px;" width="12" height="12" viewBox="0 0 12 12"><circle cx="6" cy="6" r="5.5" fill="#888" stroke="#c0c0c0"/><path d="M2.5 9.5 L9.5 2.5 A5 5 0 0 1 2.5 9.5Z" fill="#c8c8c8"/></svg>
<span class="t" style="left:1277.50px;top:339.03px;font-size:15.99px;color:#c4c4c4;font-weight:400;transform:scaleX(1.107);transform-origin:0 0;font-family:'Liberation Serif',serif;">T</span>
<svg style="left:1302px;top:341px;" width="12" height="13" viewBox="0 0 12 13"><rect x="1.5" y="2" width="9" height="9" fill="none" stroke="#c0c0c0" stroke-width="1.3"/><rect x="0" y="0.5" width="3" height="3" fill="#c0c0c0"/><rect x="0" y="9.5" width="3" height="3" fill="#c0c0c0"/><rect x="9" y="0.5" width="3" height="3" fill="#c0c0c0"/><rect x="9" y="9.5" width="3" height="3" fill="#c0c0c0"/></svg>
<svg style="left:1325px;top:341px;" width="13" height="15" viewBox="0 0 13 15"><path d="M5 0.5 H9 L12.5 4 V11 H5Z" fill="#999" stroke="#c0c0c0"/><rect x="0.5" y="7" width="7" height="7" fill="#c0c0c0"/></svg>
<div style="left:1350px;top:340px;width:10px;height:17px;background:#2e2e2e;border:1px solid #2a2a2a"></div>
<div style="left:1351px;top:341px;width:8px;height:7px;background:linear-gradient(#aaa,#777)"></div>
<div style="left:1143px;top:362px;width:223px;height:1px;background:#3a3a3a"></div>
<div style="left:1143px;top:363px;width:223px;height:1px;background:#5e5e5e"></div>
<div style="left:1147px;top:367px;width:111px;height:20px;background:linear-gradient(#606060,#4e4e4e);border:1px solid #2e2e2e;border-radius:3px"></div>
<span class="t" style="left:1155.00px;top:371.53px;font-size:10.47px;color:#e8e8e8;font-weight:400;transform:scaleX(0.926);transform-origin:0 0;">Normal</span>
<svg style="left:1248px;top:371px;" width="7" height="11" viewBox="0 0 7 11"><path d="M0 4 L3.5 0 L7 4Z M0 7 L3.5 11 L7 7Z" fill="#e0e0e0"/></svg>
<span class="t" style="left:1265.00px;top:370.83px;font-size:10.47px;color:#e8e8e8;font-weight:400;transform:scaleX(0.950);transform-origin:0 0;">Opacity:</span>
<div style="left:1306px;top:367px;width:55px;height:19px;background:#393939;border:1px solid #2e2e2e;border-radius:2px"></div>
<div style="left:1342px;top:368px;width:18px;height:17px;background:linear-gradient(#666,#555)"></div>
<svg style="left:1348px;top:375px;" width="6" height="4" viewBox="0 0 6 4"><path d="M0 0 H6 L3 4Z" fill="#e0e0e0"/></svg>
<span class="t" style="left:1311.90px;top:372.09px;font-size:10.17px;color:#ececec;font-weight:400;transform:scaleX(0.960);transform-origin:0 0;">100%</span>
<div style="left:1143px;top:390px;width:223px;height:1px;background:#3a3a3a"></div>
<div style="left:1143px;top:391px;width:223px;height:1px;background:#5e5e5e"></div>
<span class="t" style="left:1148.75px;top:400.13px;font-size:10.47px;color:#e8e8e8;font-weight:400;transform:scaleX(0.942);transform-origin:0 0;">Lock:</span>
<svg style="left:1182px;top:399px;" width="12" height="12" viewBox="0 0 12 12"><rect x="0" y="0" width="4" height="4" fill="#aaa"/><rect x="0" y="4" width="4" height="4" fill="#777"/><rect x="0" y="8" width="4" height="4" fill="#aaa"/><rect x="4" y="0" width="4" height="4" fill="#777"/><rect x="4" y="4" width="4" height="4" fill="#aaa"/><rect x="4" y="8" width="4" height="4" fill="#777"/><rect x="8" y="0" width="4" height="4" fill="#aaa"/><rect x="8" y="4" width="4" height="4" fill="#777"/><rect x="8" y="8" width="4" height="4" fill="#aaa"/></svg>
<svg style="left:1202px;top:397px;" width="16" height="16" viewBox="0 0 16 16"><path d="M15.5 0.5 L7 9 L8.5 10.5 L16 1.5Z" fill="#c0c0c0"/><path d="M6.5 9.5 Q3 10 2.5 12.5 Q2 14.5 0.5 15 Q6 15.5 8.5 12Z" fill="#c0c0c0"/></svg>
<svg style="left:1225px;top:398px;" width="14" height="14" viewBox="0 0 14 14"><path d="M7 1 V13 M1 7 H13" stroke="#c0c0c0" stroke-width="1.3"/><path d="M7 0 L4.5 3 H9.5Z M7 14 L4.5 11 H9.5Z M0 7 L3 4.5 V9.5Z M14 7 L11 4.5 V9.5Z" fill="#c0c0c0"/></svg>
<svg style="left:1248px;top:398px;" width="11" height="14" viewBox="0 0 11 14"><path d="M2.5 6 V4 A3 3 0 0 1 8.5 4 V6" fill="none" stroke="#c0c0c0" stroke-width="1.5"/><rect x="0.5" y="6" width="10" height="8" fill="#c0c0c0"/><circle cx="5.5" cy="9.5" r="1.2" fill="#666"/></svg>
<span class="t" style="left:1286.90px;top:398.53px;font-size:10.47px;color:#e8e8e8;font-weight:400;transform:scaleX(0.897);transform-origin:0 0;">Fill:</span>
<div style="left:1306px;top:395px;width:55px;height:19px;background:#393939;border:1px solid #2e2e2e;border-radius:2px"></div>
<div style="left:1342px;top:396px;width:18px;height:17px;background:linear-gradient(#666,#555)"></div>
<svg style="left:1348px;top:403px;" width="6" height="4" viewBox="0 0 6 4"><path d="M0 0 H6 L3 4Z" fill="#e0e0e0"/></svg>
<span class="t" style="left:1311.90px;top:399.79px;font-size:10.17px;color:#ececec;font-weight:400;transform:scaleX(0.960);transform-origin:0 0;">100%</span>
<div style="left:1143px;top:420px;width:223px;height:1px;background:#3a3a3a"></div>
<div style="left:1143px;top:421px;width:207px;height:287px;background:#484848"></div>
<div style="left:1350px;top:421px;width:16px;height:287px;background:linear-gradient(90deg,#3c3c3c,#444)"></div>
<div style="left:1143px;top:421px;width:207px;height:25px;background:#535353"></div>
<div style="left:1143px;top:446px;width:207px;height:1px;background:#3f3f3f"></div>
<div style="left:1173px;top:421px;width:1px;height:25px;background:#3f3f3f"></div>
<svg style="left:1151px;top:429px;" width="14" height="9" viewBox="0 0 14 9"><path d="M0.5 4.5 Q7 -2 13.5 4.5 Q7 11 0.5 4.5Z" fill="#bdbdbd"/><circle cx="7" cy="4.3" r="2.6" fill="#3a3a3a"/><circle cx="7" cy="4.3" r="1.1" fill="#888"/></svg>
<svg style="left:1177px;top:424px;" width="32" height="19" viewBox="0 0 32 19"><defs><pattern id="chk" width="8" height="8" patternUnits="userSpaceOnUse"><rect width="8" height="8" fill="#fff"/><rect width="4" height="4" fill="#ccc"/><rect x="4" y="4" width="4" height="4" fill="#ccc"/></pattern></defs><rect x="0.5" y="0.5" width="31" height="18" fill="url(#chk)" stroke="#222"/><path d="M8 18.5 L10 13 L14 11.5 H18 L22 13 L24 18.5Z" fill="#2a2e48"/><ellipse cx="16" cy="8" rx="3.2" ry="3.8" fill="#c79a84"/><path d="M12.5 7 Q12 2.5 16 2.5 Q20 2.5 19.5 7 Q18 4.5 16 5 Q14 4.5 12.5 7Z" fill="#1a1414"/><path d="M14.5 11.5 L16 15 L17.5 11.5Z" fill="#ddd"/></svg>
<span class="t" style="left:1219.20px;top:429.13px;font-size:10.47px;color:#e8e8e8;font-weight:400;transform:scaleX(0.899);transform-origin:0 0;">man</span>
<div style="left:1143px;top:447px;width:30px;height:26px;background:#535353"></div>
<div style="left:1174px;top:447px;width:176px;height:26px;background:#59657a"></div>
<div style="left:1173px;top:447px;width:1px;height:26px;background:#3f3f3f"></div>
<svg style="left:1151px;top:455px;" width="14" height="9" viewBox="0 0 14 9"><path d="M0.5 4.5 Q7 -2 13.5 4.5 Q7 11 0.5 4.5Z" fill="#bdbdbd"/><circle cx="7" cy="4.3" r="2.6" fill="#3a3a3a"/><circle cx="7" cy="4.3" r="1.1" fill="#888"/></svg>
<div style="left:1177px;top:449px;width:33px;height:21px;background:#222;border:2px solid #111"></div>
<div style="left:1179px;top:451px;width:29px;height:17px;background:#00e3ff"></div>
<svg style="left:1175px;top:447px;" width="37" height="25" viewBox="0 0 37 25"><path d="M0.5 7 V0.5 H7 M30 0.5 H36.5 V7 M36.5 18 V24.5 H30 M7 24.5 H0.5 V18" fill="none" stroke="#fff" stroke-width="1.2"/></svg>
<span class="t" style="left:1219.00px;top:455.23px;font-size:10.47px;color:#f0f0f0;font-weight:400;transform:scaleX(0.947);transform-origin:0 0;">Awesome bright colour</span>
<div style="left:1143px;top:473px;width:207px;height:1px;background:#3f3f3f"></div>
<div style="left:1143px;top:707px;width:223px;height:1px;background:#3a3a3a"></div>
<div style="left:1143px;top:708px;width:223px;height:20px;background:#535353"></div>
<svg style="left:1161px;top:713px;" width="16" height="10" viewBox="0 0 16 10"><path d="M6 1.5 H4.5 A3.5 3.5 0 0 0 4.5 8.5 H6 M10 1.5 H11.5 A3.5 3.5 0 0 1 11.5 8.5 H10 M5.5 5 H10.5" fill="none" stroke="#a8a8a8" stroke-width="1.8"/></svg>
<span class="t" style="left:1190.50px;top:711.66px;font-size:13.08px;color:#a8a8a8;font-weight:400;transform:scaleX(1.127);transform-origin:0 0;font-style:italic;font-family:'Liberation Serif',serif;">fx</span>
<svg style="left:1204px;top:721px;" width="4" height="3" viewBox="0 0 4 3"><path d="M0 0 H4 L2 3Z" fill="#ddd"/></svg>
<svg style="left:1217px;top:713px;" width="14" height="12" viewBox="0 0 14 12"><rect x="0" y="0" width="14" height="11" fill="#a8a8a8"/><circle cx="7" cy="5.5" r="2.5" fill="#444"/></svg>
<svg style="left:1244px;top:712px;" width="13" height="13" viewBox="0 0 13 13"><circle cx="6.5" cy="6.5" r="5.5" fill="#777" stroke="#a8a8a8" stroke-width="1.2"/><path d="M2.5 10.5 L10.5 2.5 A5.5 5.5 0 0 1 2.5 10.5Z" fill="#a8a8a8"/></svg>
<svg style="left:1258px;top:721px;" width="4" height="3" viewBox="0 0 4 3"><path d="M0 0 H4 L2 3Z" fill="#ddd"/></svg>
<svg style="left:1270px;top:713px;" width="13" height="11" viewBox="0 0 13 11"><path d="M0 0 H5 L6.5 2 H13 V11 H0Z" fill="#a8a8a8"/></svg>
<svg style="left:1298px;top:713px;" width="12" height="12" viewBox="0 0 12 12"><rect x="0" y="0" width="12" height="12" fill="#a8a8a8"/><path d="M0 5 H6 V12 H0Z" fill="#535353"/><path d="M0.8 6 L5 10.5 V6Z" fill="#a8a8a8"/></svg>
<svg style="left:1325px;top:712px;" width="12" height="13" viewBox="0 0 12 13"><path d="M4 2 V0.5 H8 V2" fill="none" stroke="#a8a8a8" stroke-width="1"/><rect x="0" y="2" width="12" height="2" fill="#a8a8a8"/><path d="M1.5 4.5 H10.5 V13 H1.5Z" fill="#a8a8a8"/><path d="M4 6 V11.5 M6 6 V11.5 M8 6 V11.5" stroke="#535353" stroke-width="0.9"/></svg>
<svg style="left:16px;top:740px;" width="17" height="17" viewBox="0 0 17 17"><path d="M0 2.3 L7.5 1.3 V8 H0Z M8.3 1.2 L16.5 0 V8 H8.3Z M0 8.8 H7.5 V15.5 L0 14.5Z M8.3 8.8 H16.5 V16.5 L8.3 15.4Z" fill="#fff"/></svg>
<div style="left:48px;top:728px;width:344px;height:40px;background:#333333"></div>
<svg style="left:57px;top:737px;" width="22" height="22" viewBox="0 0 22 22"><circle cx="11" cy="11" r="9.2" fill="none" stroke="#fff" stroke-width="2.4"/></svg>
<span class="t" style="left:87.80px;top:740.23px;font-size:15.99px;color:#a0a0a0;font-weight:400;transform:scaleX(0.917);transform-origin:0 0;">Ask me anything</span>
<svg style="left:365px;top:740px;" width="12" height="17" viewBox="0 0 12 17"><rect x="3.5" y="0.5" width="5" height="10" rx="2.5" fill="none" stroke="#9a9a9a" stroke-width="1"/><path d="M1 7 V8 Q1 13 6 13 Q11 13 11 8 V7 M6 13 V16 M3 16 H9" fill="none" stroke="#9a9a9a" stroke-width="1"/></svg>
<svg style="left:406px;top:738px;" width="21" height="20" viewBox="0 0 21 20"><rect x="4.5" y="1.5" width="12" height="14" fill="none" stroke="#fff" stroke-width="1.3"/><path d="M3 4 H0.7 V13 H3 M18 4 H20.3 V13 H18" fill="none" stroke="#fff" stroke-width="1.2"/></svg>
<svg style="left:456px;top:738px;" width="22" height="22" viewBox="0 0 22 22"><path d="M2 9 Q4 1 12 1 Q20 1 21 10 V12 H7 Q7.5 17 13 17.5 Q17 17.5 20 15.5 V20 Q16 22 12 21.5 Q2 20.5 2 12 Q2 7 7 5 Q5 7 5 9 H14.5 Q14 5 10 5 Q5 5 2 9Z" fill="#1a7fd4"/></svg>
<svg style="left:503px;top:738px;" width="23" height="20" viewBox="0 0 23 20"><path d="M0.5 1 H8 L10 3 H22 V18 H0.5Z" fill="#e8b84a"/><path d="M0.5 5 H22 V18 H0.5Z" fill="#fbd76a"/><rect x="7" y="12" width="9" height="7" fill="#29a8e8"/><rect x="9.5" y="15" width="4" height="4" fill="#fbd76a"/></svg>
<svg style="left:553px;top:737px;" width="21" height="23" viewBox="0 0 21 23"><path d="M6 6 Q6 1 10.5 1 Q15 1 15 6" fill="none" stroke="#fff" stroke-width="1.8"/><path d="M1 6 H20 V22 L1 20.5Z" fill="#fff"/><path d="M6 10 H10 V13.5 H6Z M11 10 H15 V13.5 H11Z M6 14.5 H10 V18 H6Z M11 14.5 H15 V18 H11Z" fill="#000"/></svg>
<svg style="left:601px;top:737px;" width="23" height="23" viewBox="0 0 23 23"><defs><linearGradient id="op" x1="0" y1="0" x2="0" y2="1"><stop offset="0" stop-color="#ff1b2d"/><stop offset="1" stop-color="#a70014"/></linearGradient></defs><ellipse cx="11.5" cy="11.5" rx="11" ry="11" fill="url(#op)"/><ellipse cx="11.5" cy="11.5" rx="4.2" ry="7.8" fill="#03050a"/></svg>
<svg style="left:650px;top:737px;" width="23" height="23" viewBox="0 0 23 23"><circle cx="11.5" cy="11.5" r="11" fill="#db4437"/><path d="M11.5 11.5 L2 17 A11 11 0 0 0 17 21Z" fill="#0f9d58"/><path d="M11.5 11.5 L17 21 A11 11 0 0 0 22.5 11 L11.5 6Z" fill="#ffcd40"/><path d="M11.5 11.5 L2 17 A11 11 0 0 1 1.5 7 L11.5 6Z" fill="#db4437"/><circle cx="11.5" cy="11.5" r="5.2" fill="#fff"/><circle cx="11.5" cy="11.5" r="4.2" fill="#4285f4"/></svg>
<div style="left:642px;top:766px;width:40px;height:2px;background:#76b9ed"></div>
<div style="left:687px;top:728px;width:48px;height:40px;background:#3b3c3e"></div>
<div style="left:687px;top:766px;width:48px;height:2px;background:#76b9ed"></div>
<div style="left:700px;top:737px;width:23px;height:22px;background:#001d34;border:1.5px solid #31a8ff"></div>
<span class="t" style="left:704.00px;top:741.50px;font-size:13.81px;color:#31a8ff;font-weight:700;transform:scaleX(0.828);transform-origin:0 0;">Ps</span>
<svg style="left:1152px;top:744px;" width="14" height="8" viewBox="0 0 14 8"><path d="M1 7.5 L7 1.5 L13 7.5" fill="none" stroke="#fff" stroke-width="1.3"/></svg>
<svg style="left:1174px;top:742px;" width="18" height="12" viewBox="0 0 18 12"><path d="M3 0 V3 M6 0 V3 M1.5 3 H7.5 V6 Q7.5 8 4.5 8 Q1.5 8 1.5 6Z M4.5 8 V11" fill="none" stroke="#fff" stroke-width="1.1"/><rect x="6.5" y="3" width="9.5" height="8" fill="none" stroke="#fff" stroke-width="1"/><rect x="16" y="5" width="1.5" height="4" fill="#fff"/></svg>
<svg style="left:1198px;top:742px;" width="18" height="11" viewBox="0 0 18 11"><path d="M3 10.5 Q0 10.5 0 7.5 Q0 5 3 5 Q4 1 8.5 1 Q12.5 1 13.5 4.5 Q17.5 4.5 17.5 7.5 Q17.5 10.5 14.5 10.5Z" fill="#e8e8e8"/></svg>
<svg style="left:1225px;top:742px;" width="14" height="14" viewBox="0 0 14 14"><path d="M1 13 A12 12 0 0 1 13 1 M4 13 A9 9 0 0 1 13 4 M7 13 A6 6 0 0 1 13 7" fill="none" stroke="#fff" stroke-width="1"/><rect x="9" y="9" width="4.5" height="4.5" fill="#fff"/></svg>
<svg style="left:1246px;top:741px;" width="18" height="14" viewBox="0 0 18 14"><path d="M1 4.5 H4 L8.5 1 V13 L4 9.5 H1Z" fill="none" stroke="#fff" stroke-width="1"/><path d="M10.5 4.5 Q12 7 10.5 9.5 M12.5 2.5 Q15.5 7 12.5 11.5 M14.5 0.5 Q19 7 14.5 13.5" fill="none" stroke="#fff" stroke-width="1"/></svg>
<svg style="left:1270px;top:740px;" width="17" height="16" viewBox="0 0 17 16"><path d="M0.5 0.5 H16.5 V11.5 H11 L8.5 15 L6 11.5 H0.5Z" fill="#fff"/><path d="M3.5 3.5 H13.5 M3.5 6 H13.5 M3.5 8.5 H10" stroke="#000" stroke-width="1.1"/></svg>
<span class="t" style="left:1303.00px;top:732.71px;font-size:11.92px;color:#ffffff;font-weight:400;transform:scaleX(0.934);transform-origin:0 0;">11:17 PM</span>
<span class="t" style="left:1300.20px;top:749.42px;font-size:12.79px;color:#ffffff;font-weight:400;transform:scaleX(0.910);transform-origin:0 0;">2/26/2020</span>
<div style="left:1361px;top:728px;width:1px;height:40px;background:#555"></div>
<div style="left:81px;top:126px;width:962px;height:542px;background:#2a1a18"></div>
<div style="left:82px;top:127px;width:960px;height:540px;background:#00e1ff"></div>
<svg style="left:0;top:0" width="1366" height="768" viewBox="0 0 1366 768">
<defs>
 <filter id="b05" x="-20%" y="-20%" width="140%" height="140%"><feGaussianBlur stdDeviation="0.6"/></filter>
 <filter id="b1" x="-20%" y="-20%" width="140%" height="140%"><feGaussianBlur stdDeviation="1"/></filter>
 <filter id="b2" x="-30%" y="-30%" width="160%" height="160%"><feGaussianBlur stdDeviation="2.5"/></filter>
 <filter id="b4" x="-50%" y="-50%" width="200%" height="200%"><feGaussianBlur stdDeviation="5"/></filter>
 <filter id="b8" x="-50%" y="-50%" width="200%" height="200%"><feGaussianBlur stdDeviation="9"/></filter>
 <clipPath id="imgclip"><rect x="82" y="127" width="960" height="540"/></clipPath>
 <clipPath id="fclip"><path d="M474.0 262.0 C445.7 275.0 473.7 320.3 474.0 340.0 C474.3 359.7 475.3 368.5 476.0 380.0 C476.7 391.5 477.0 400.7 478.0 409.0 C479.0 417.3 480.2 423.0 482.0 430.0 C483.8 437.0 486.0 445.5 489.0 451.0 C492.0 456.5 494.8 459.3 500.0 463.0 C505.2 466.7 510.5 470.5 520.0 473.0 C529.5 475.5 546.2 477.7 557.0 478.0 C567.8 478.3 577.0 477.0 585.0 475.0 C593.0 473.0 599.2 469.5 605.0 466.0 C610.8 462.5 616.2 458.3 620.0 454.0 C623.8 449.7 625.8 445.7 628.0 440.0 C630.2 434.3 631.5 426.7 633.0 420.0 C634.5 413.3 635.7 407.5 637.0 400.0 C638.3 392.5 639.8 384.2 641.0 375.0 C642.2 365.8 643.5 363.8 644.0 345.0 C644.5 326.2 672.3 275.8 644.0 262.0 C615.7 248.2 502.3 249.0 474.0 262.0Z"/></clipPath>
 <clipPath id="sclip"><path d="M487.0 443.0 L346.0 506.0 L340.0 514.0 L327.5 561.0 L303.0 667.0 L828.0 667.0 L808.8 570.6 L794.7 512.8 L786.9 505.0 L628.0 442.0Z"/></clipPath>
 <clipPath id="hclip"><path d="M451.6 292.0 C451.2 284.6 450.6 282.5 453.0 275.0 C455.4 267.5 460.0 256.2 466.0 247.0 C472.0 237.8 480.2 227.7 489.0 220.0 C497.8 212.3 508.2 205.7 519.0 201.0 C529.8 196.3 544.3 193.3 554.0 192.0 C563.7 190.7 570.5 191.8 577.0 193.0 C583.5 194.2 589.3 197.2 593.0 199.0 C596.7 200.8 597.0 203.4 599.0 204.0 C601.0 204.6 601.0 202.2 605.0 202.5 C609.0 202.8 617.3 203.1 623.0 206.0 C628.7 208.9 634.3 214.7 639.0 220.0 C643.7 225.3 647.7 230.7 651.0 238.0 C654.3 245.3 657.6 255.0 659.0 264.0 C660.4 273.0 660.0 284.7 659.5 292.0 C659.0 299.3 658.2 300.1 656.3 307.6 C654.4 315.1 649.7 329.9 648.0 337.0 C646.3 344.1 647.2 349.5 646.0 350.0 C644.8 350.5 642.0 345.8 641.0 340.0 C640.0 334.2 641.7 322.0 639.7 315.0 C637.7 308.0 634.0 303.8 628.8 297.8 C623.5 291.8 613.9 284.7 608.4 279.0 C602.9 273.3 599.9 267.6 596.0 263.4 C592.1 259.2 589.4 255.3 585.0 254.0 C580.6 252.7 572.6 252.8 569.4 255.6 C566.2 258.4 567.6 265.3 566.0 271.0 C564.4 276.7 563.1 285.0 560.0 290.0 C556.9 295.0 552.5 298.4 547.5 301.0 C542.5 303.6 538.1 304.3 530.0 305.6 C521.9 306.9 508.0 307.5 499.0 308.8 C490.0 310.0 480.2 309.5 476.0 313.0 C471.8 316.5 475.0 324.5 474.0 330.0 C473.0 335.5 471.8 344.1 470.0 346.0 C468.2 347.9 465.9 346.1 463.4 341.6 C460.9 337.2 457.2 327.6 455.2 319.3 C453.2 311.0 452.0 299.4 451.6 292.0Z"/></clipPath>
 <linearGradient id="suitg" x1="0" y1="0" x2="0" y2="1"><stop offset="0" stop-color="#2b2b40"/><stop offset="1" stop-color="#242436"/></linearGradient>
 <radialGradient id="faceg" cx="0.5" cy="0.4" r="0.65"><stop offset="0" stop-color="#e6c0ae"/><stop offset="0.6" stop-color="#ddb09c"/><stop offset="1" stop-color="#cf9e88"/></radialGradient>
 <linearGradient id="neckg" x1="0" y1="0" x2="0" y2="1"><stop offset="0" stop-color="#d4a48c"/><stop offset="0.45" stop-color="#c89478"/><stop offset="1" stop-color="#c08a70"/></linearGradient>
 <linearGradient id="tieg" x1="0" y1="0" x2="1" y2="1"><stop offset="0" stop-color="#b8b888"/><stop offset="0.3" stop-color="#8e9480"/><stop offset="0.5" stop-color="#c8c898"/><stop offset="0.7" stop-color="#889080"/><stop offset="1" stop-color="#b0b088"/></linearGradient>
</defs>
<g clip-path="url(#imgclip)">
 <path d="M487.0 443.0 L346.0 506.0 L340.0 514.0 L327.5 561.0 L303.0 667.0 L828.0 667.0 L808.8 570.6 L794.7 512.8 L786.9 505.0 L628.0 442.0Z" fill="url(#suitg)"/>
 <g clip-path="url(#sclip)">
  <g filter="url(#b8)" opacity="0.22">
   <ellipse cx="400" cy="540" rx="45" ry="25" fill="#3a3d5a"/>
   <ellipse cx="745" cy="545" rx="35" ry="25" fill="#3a3d5a"/>
   <ellipse cx="360" cy="640" rx="30" ry="30" fill="#363a50"/>
   <ellipse cx="720" cy="620" rx="30" ry="40" fill="#383c52"/>
  </g>
  <g filter="url(#b1)" opacity="0.9">
   <path d="M335 595 Q365 605 392 650" stroke="#191b28" stroke-width="2" fill="none"/>
   <path d="M345 625 Q370 635 385 667" stroke="#191b28" stroke-width="1.5" fill="none"/>
   <path d="M788 515 Q782 550 762 585" stroke="#191b28" stroke-width="1.8" fill="none"/><path d="M770 600 Q790 612 808 640" stroke="#191b28" stroke-width="1.5" fill="none"/>
   <path d="M708 568 Q698 600 708 660" stroke="#191b28" stroke-width="2" fill="none"/>
   <path d="M712 570 Q725 590 722 640" stroke="#3e4258" stroke-width="2" fill="none"/>
  </g>
 </g>
 <path d="M484.0 430.0 L490.0 458.0 L499.0 490.0 L520.0 503.0 L550.0 527.0 L556.0 531.0 L574.0 522.0 L598.0 500.0 L620.0 470.0 L628.0 440.0 L620.0 430.0Z" fill="url(#neckg)"/>
 <path d="M488.4 455.0 L499.0 500.0 L520.0 581.0 L526.0 632.0 L537.0 667.0 L586.0 667.0 L598.0 632.0 L603.8 581.0 L618.7 514.9 L627.7 455.0 L620.0 470.0 L598.0 500.0 L574.0 522.0 L556.0 531.0 L520.0 503.0 L499.0 490.0 L490.0 462.0Z" fill="#e8e9ef"/>
 <path d="M520.0 583.8 L537.8 670.0 L585.8 670.0 L603.8 581.0 L598.0 632.0 L586.0 667.0 L537.0 667.0 L526.0 632.0Z" fill="#1e2030"/>
 <path d="M488.4 456.0 L499.0 500.0 L522.9 583.8 L534.8 553.8 L551.3 531.4 L520.0 503.0 L499.0 490.0Z" fill="#ececf2"/>
 <path d="M627.7 456.0 L618.7 514.9 L603.8 580.8 L587.3 556.8 L569.3 531.4 L598.0 500.0 L620.0 470.0Z" fill="#ececf2"/>
 <path d="M522.9 583.8 L534.8 553.8 M603.8 580.8 L587.3 556.8" stroke="#b8bcc8" stroke-width="1.2" filter="url(#b05)"/>
 <path d="M487.0 443.0 L493.0 494.0 L460.0 518.0 L457.0 527.0 L478.0 667.0 L537.8 667.0 L520.0 583.8 L499.0 500.0 L488.4 456.0Z" fill="#26263a"/>
 <path d="M628.0 442.0 L639.7 514.9 L663.7 538.9 L657.7 667.0 L585.8 667.0 L603.8 581.0 L618.7 514.9 L627.7 456.0Z" fill="#26263a"/>
 <path d="M493 494 L460 518 L457 527 L478 667" stroke="#16182a" stroke-width="1.4" fill="none" filter="url(#b05)"/>
 <path d="M639.7 514.9 L663.7 538.9 L657.7 667" stroke="#16182a" stroke-width="1.4" fill="none" filter="url(#b05)"/>
 <path d="M548.3 580.8 L567.8 583.8 L577.0 620.0 L586.0 667.0 L533.0 667.0 L541.0 615.0Z" fill="url(#tieg)"/>
 <path d="M534.8 553.8 L551.3 531.4 L569.3 531.4 L587.3 556.8 L567.8 583.8 L548.3 580.8Z" fill="url(#tieg)"/>
 <g filter="url(#b1)" opacity="0.6"><path d="M548 600 L578 650 M560 590 L542 640 M545 560 L582 545" stroke="#e0e0a8" stroke-width="2"/><path d="M540 572 L585 560" stroke="#6e7258" stroke-width="1.5"/></g>
 <path d="M474.0 345.0 C472.0 344.3 465.8 340.7 462.0 341.0 C458.2 341.3 452.8 343.0 451.0 347.0 C449.2 351.0 449.8 357.8 451.0 365.0 C452.2 372.2 455.2 383.5 458.0 390.0 C460.8 396.5 464.7 400.7 468.0 404.0 C471.3 407.3 476.3 409.0 478.0 410.0" fill="#d6a48e"/>
 <path d="M643.0 345.0 C644.7 343.8 649.7 338.3 653.0 338.0 C656.3 337.7 661.2 339.0 663.0 343.0 C664.8 347.0 665.2 354.5 664.0 362.0 C662.8 369.5 659.0 381.3 656.0 388.0 C653.0 394.7 649.2 399.0 646.0 402.0 C642.8 405.0 638.5 405.3 637.0 406.0" fill="#d6a48e"/>
 <path d="M467 352 C459 356 460 378 468 394" stroke="#b88470" stroke-width="2" fill="none" filter="url(#b1)"/>
 <path d="M649 352 C657 356 655 378 647 394" stroke="#b88470" stroke-width="2" fill="none" filter="url(#b1)"/>
 <path d="M474.0 262.0 C445.7 275.0 473.7 320.3 474.0 340.0 C474.3 359.7 475.3 368.5 476.0 380.0 C476.7 391.5 477.0 400.7 478.0 409.0 C479.0 417.3 480.2 423.0 482.0 430.0 C483.8 437.0 486.0 445.5 489.0 451.0 C492.0 456.5 494.8 459.3 500.0 463.0 C505.2 466.7 510.5 470.5 520.0 473.0 C529.5 475.5 546.2 477.7 557.0 478.0 C567.8 478.3 577.0 477.0 585.0 475.0 C593.0 473.0 599.2 469.5 605.0 466.0 C610.8 462.5 616.2 458.3 620.0 454.0 C623.8 449.7 625.8 445.7 628.0 440.0 C630.2 434.3 631.5 426.7 633.0 420.0 C634.5 413.3 635.7 407.5 637.0 400.0 C638.3 392.5 639.8 384.2 641.0 375.0 C642.2 365.8 643.5 363.8 644.0 345.0 C644.5 326.2 672.3 275.8 644.0 262.0 C615.7 248.2 502.3 249.0 474.0 262.0Z" fill="url(#faceg)"/>
 <g clip-path="url(#fclip)">
  <g filter="url(#b8)" opacity="0.5">
   <ellipse cx="478" cy="405" rx="10" ry="45" fill="#b98068"/>
   <ellipse cx="640" cy="400" rx="10" ry="45" fill="#b98068"/>
   <ellipse cx="557" cy="478" rx="50" ry="8" fill="#b07a66"/>
  </g>
  <g filter="url(#b4)" opacity="0.45">
   <ellipse cx="520" cy="390" rx="20" ry="14" fill="#ecc8b4"/>
   <ellipse cx="600" cy="388" rx="20" ry="14" fill="#ecc8b4"/>
   <ellipse cx="560" cy="455" rx="25" ry="10" fill="#e8c0aa"/>
  </g>
 </g>
 <path d="M500 470 C520 480 540 484 557 484 C575 484 598 478 615 466" stroke="#a87562" stroke-width="3" fill="none" filter="url(#b2)"/>
 <g filter="url(#b2)">
  <path d="M549 345 C547 362 543 376 541 388" stroke="#c89682" stroke-width="3" fill="none"/>
  <path d="M566 345 C568 362 572 376 573 388" stroke="#cc9a86" stroke-width="2" fill="none"/>
 </g>
 
 <g filter="url(#b2)" opacity="0.7">
  <ellipse cx="537" cy="389" rx="5" ry="7" fill="#b8806c"/>
  <ellipse cx="578" cy="389" rx="5" ry="7" fill="#b8806c"/>
 </g>
 <ellipse cx="557" cy="386" rx="10" ry="8" fill="#e4b8a2" filter="url(#b2)"/>
 <path d="M536 392 C540 396 544 393 549 393 C553 393 555 396 557 397 C559 396 562 393 566 393 C571 393 575 396 579 392" stroke="#6a3a30" stroke-width="2.2" fill="none" filter="url(#b05)"/>
 <g filter="url(#b2)" opacity="0.5">
  <ellipse cx="518" cy="346" rx="17" ry="8" fill="#b07a68"/>
  <ellipse cx="594" cy="344" rx="17" ry="8" fill="#b07a68"/>
 </g>
 <ellipse cx="518" cy="344" rx="15" ry="5.2" fill="#e6d4d0" filter="url(#b05)"/>
 <ellipse cx="594" cy="342" rx="15" ry="5.2" fill="#e6d4d0" filter="url(#b05)"/>
 <circle cx="518" cy="344" r="5.5" fill="#4e2a22"/>
 <circle cx="594" cy="342" r="5.5" fill="#4e2a22"/>
 <circle cx="518" cy="344" r="2.2" fill="#1a0c0a"/>
 <circle cx="594" cy="342" r="2.2" fill="#1a0c0a"/>
 <circle cx="517" cy="341.5" r="1.1" fill="#7a7aff"/>
 <circle cx="593" cy="339.5" r="1.1" fill="#7a7aff"/>
 <path d="M502 346 C508 337 526 335 534 343" stroke="#4a2620" stroke-width="2" fill="none" filter="url(#b05)"/>
 <path d="M578 343 C585 335 602 334 610 342" stroke="#4a2620" stroke-width="2" fill="none" filter="url(#b05)"/>
 <path d="M490 331 C500 322 518 318 535 320 C541 322 545 327 546 333 C535 329 520 327 505 331 C498 333 494 335 490 336Z" fill="#33231f" filter="url(#b1)"/>
 <path d="M571 331 C580 321 598 317 612 319 C619 321 623 325 626 331 C615 327 600 326 588 328 C580 329 575 331 571 333Z" fill="#33231f" filter="url(#b1)"/>
 <path d="M526.0 421.0 C526.8 418.8 539.8 415.8 545.0 415.0 C550.2 414.2 552.8 416.0 557.0 416.0 C561.2 416.0 565.0 414.2 570.0 415.0 C575.0 415.8 586.3 418.8 587.0 421.0 C587.7 423.2 579.0 426.5 574.0 428.0 C569.0 429.5 562.7 430.0 557.0 430.0 C551.3 430.0 545.2 429.5 540.0 428.0 C534.8 426.5 525.2 423.2 526.0 421.0Z" fill="#c88e86" filter="url(#b1)"/>
 <path d="M529 421 C545 422 570 422 583 421" stroke="#8a5a52" stroke-width="1.3" filter="url(#b05)" fill="none"/>
 <path d="M511.4 430.0 C511.4 427.6 514.4 415.7 517.6 411.6 C520.8 407.5 526.7 407.4 530.8 405.5 C534.9 403.6 539.1 401.5 542.2 400.2 C545.3 398.9 546.0 398.0 549.2 397.6 C552.4 397.2 558.0 397.5 561.5 397.6 C565.0 397.8 566.6 397.3 570.3 398.5 C574.0 399.7 579.7 402.4 583.5 404.6 C587.3 406.8 590.8 407.3 593.1 411.6 C595.4 415.9 598.4 428.9 597.5 430.5 C596.6 432.1 591.7 423.7 587.9 421.3 C584.1 418.9 579.8 417.2 574.7 416.0 C569.6 414.8 563.0 413.9 557.1 413.8 C551.2 413.7 544.6 414.0 539.5 415.1 C534.4 416.2 530.0 418.6 526.4 420.4 C522.8 422.2 520.1 424.1 517.6 425.7 C515.1 427.3 511.4 432.4 511.4 430.0Z" fill="#362a26" filter="url(#b05)"/>
 <path d="M556 402 L558 413" stroke="#b8a498" stroke-width="1.5" fill="none" opacity="0.5" filter="url(#b1)"/>
 <path d="M463.4 341.6 L468.7 356.8 L471.0 376.0 L474.5 376.0 L474.5 312.0 L470.0 312.0Z M648.0 336.9 L645.2 357.0 L640.0 362.0 L640.0 320.0 L650.0 320.0Z" fill="#1e1616" filter="url(#b05)"/>
 <path d="M451.6 292.0 C451.2 284.6 450.6 282.5 453.0 275.0 C455.4 267.5 460.0 256.2 466.0 247.0 C472.0 237.8 480.2 227.7 489.0 220.0 C497.8 212.3 508.2 205.7 519.0 201.0 C529.8 196.3 544.3 193.3 554.0 192.0 C563.7 190.7 570.5 191.8 577.0 193.0 C583.5 194.2 589.3 197.2 593.0 199.0 C596.7 200.8 597.0 203.4 599.0 204.0 C601.0 204.6 601.0 202.2 605.0 202.5 C609.0 202.8 617.3 203.1 623.0 206.0 C628.7 208.9 634.3 214.7 639.0 220.0 C643.7 225.3 647.7 230.7 651.0 238.0 C654.3 245.3 657.6 255.0 659.0 264.0 C660.4 273.0 660.0 284.7 659.5 292.0 C659.0 299.3 658.2 300.1 656.3 307.6 C654.4 315.1 649.7 329.9 648.0 337.0 C646.3 344.1 647.2 349.5 646.0 350.0 C644.8 350.5 642.0 345.8 641.0 340.0 C640.0 334.2 641.7 322.0 639.7 315.0 C637.7 308.0 634.0 303.8 628.8 297.8 C623.5 291.8 613.9 284.7 608.4 279.0 C602.9 273.3 599.9 267.6 596.0 263.4 C592.1 259.2 589.4 255.3 585.0 254.0 C580.6 252.7 572.6 252.8 569.4 255.6 C566.2 258.4 567.6 265.3 566.0 271.0 C564.4 276.7 563.1 285.0 560.0 290.0 C556.9 295.0 552.5 298.4 547.5 301.0 C542.5 303.6 538.1 304.3 530.0 305.6 C521.9 306.9 508.0 307.5 499.0 308.8 C490.0 310.0 480.2 309.5 476.0 313.0 C471.8 316.5 475.0 324.5 474.0 330.0 C473.0 335.5 471.8 344.1 470.0 346.0 C468.2 347.9 465.9 346.1 463.4 341.6 C460.9 337.2 457.2 327.6 455.2 319.3 C453.2 311.0 452.0 299.4 451.6 292.0Z" fill="#191212"/>
 <g clip-path="url(#hclip)">
  <filter id="hn" x="0" y="0" width="100%" height="100%"><feTurbulence type="fractalNoise" baseFrequency="0.12 0.3" numOctaves="2" seed="5"/><feColorMatrix type="matrix" values="0 0 0 0 0.5  0 0 0 0 0.46  0 0 0 0 0.44  0 0 0 5 -3.0"/><feGaussianBlur stdDeviation="0.5"/></filter>
  <rect x="440" y="185" width="230" height="180" filter="url(#hn)" opacity="0.22" transform="rotate(-25 555 275)"/>
  <g filter="url(#b1)" opacity="0.5">
   <path d="M488 262 C505 245 530 235 560 228" stroke="#7a706c" stroke-width="2" fill="none"/>
   <path d="M495 250 C515 236 540 228 565 224" stroke="#6a605c" stroke-width="1.5" fill="none"/>
   <path d="M478 292 C495 275 520 266 548 264" stroke="#6a5e5a" stroke-width="1.8" fill="none"/>
   <path d="M485 300 C505 288 528 280 552 276" stroke="#5a4e4a" stroke-width="1.5" fill="none"/>
   <path d="M612 222 C628 232 642 250 650 272" stroke="#6a605c" stroke-width="2" fill="none"/>
   <path d="M620 240 C632 252 640 268 645 290" stroke="#5a504c" stroke-width="1.5" fill="none"/>
   <path d="M515 214 C535 206 555 203 578 206" stroke="#4a4040" stroke-width="1.5" fill="none"/>
   <path d="M600 262 C612 272 625 290 635 310" stroke="#5a4a46" stroke-width="1.5" fill="none"/>
  </g>
  <g filter="url(#b4)" opacity="0.5">
   <path d="M520 258 C540 245 565 238 590 232" stroke="#050303" stroke-width="8" fill="none"/>
  </g>
  </g>
 </g>
</g>
</svg>
</body></html>
